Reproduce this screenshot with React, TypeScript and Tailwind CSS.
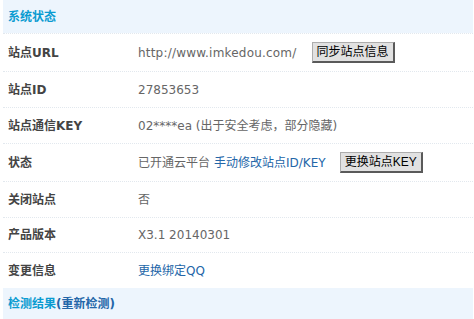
export default function App() {
  const btn =
    'h-[21px] px-[4px] bg-[#e1e1e1] text-black text-[12px] leading-none border border-t-[#adadad] border-l-[#adadad] border-b-2 border-r-2 border-b-[#5a5a5a] border-r-[#5a5a5a] font-["Liberation_Sans","Noto_Sans_CJK_SC",sans-serif]'

  const rows: { label: string; h: string; value: React.ReactNode }[] = [
    {
      label: '站点URL',
      h: 'h-[38px]',
      value: (
        <>
          <span className="tracking-[0.2px]">http://www.imkedou.com/</span>
          <button className={`ml-[15px] ${btn}`}>同步站点信息</button>
        </>
      ),
    },
    { label: '站点ID', h: 'h-[36px]', value: <span>27853653</span> },
    {
      label: '站点通信KEY',
      h: 'h-[36px]',
      value: <span>02****ea (出于安全考虑，部分隐藏)</span>,
    },
    {
      label: '状态',
      h: 'h-[38px]',
      value: (
        <>
          <span>已开通云平台</span>
          <a className="ml-[4px] text-[#2366a8]">手动修改站点ID/KEY</a>
          <button className={`ml-[14px] ${btn}`}>更换站点KEY</button>
        </>
      ),
    },
    { label: '关闭站点', h: 'h-[36px]', value: <span>否</span> },
    { label: '产品版本', h: 'h-[35px]', value: <span>X3.1 20140301</span> },
    {
      label: '变更信息',
      h: 'h-[36px]',
      value: <a className="text-[#2366a8]">更换绑定QQ</a>,
    },
  ]

  return (
    <div className="min-h-screen bg-white pl-[3px] pr-[1px] font-['DejaVu_Sans','Noto_Sans_CJK_SC',sans-serif] text-[12px]">
      {/* 系统状态 */}
      <div className="h-[33px] bg-[#edf5fd] flex items-center pl-[5px]">
        <span className="font-bold text-[#0a9bd1]">系统状态</span>
      </div>

      {rows.map((r) => (
        <div
          key={r.label}
          className={`${r.h} flex items-center border-t border-dotted border-[#e2e8ee]`}
        >
          <div className="w-[135px] pl-[5px] font-bold text-[#444]">{r.label}</div>
          <div className="flex items-center text-[#666]">{r.value}</div>
        </div>
      ))}

      {/* 检测结果 */}
      <div className="h-[32px] bg-[#edf5fd] flex items-center pl-[5px]">
        <span className="font-bold text-[#0a9bd1]">检测结果</span>
        <span className="font-bold text-[#2366a8]">(重新检测)</span>
      </div>
    </div>
  )
}
